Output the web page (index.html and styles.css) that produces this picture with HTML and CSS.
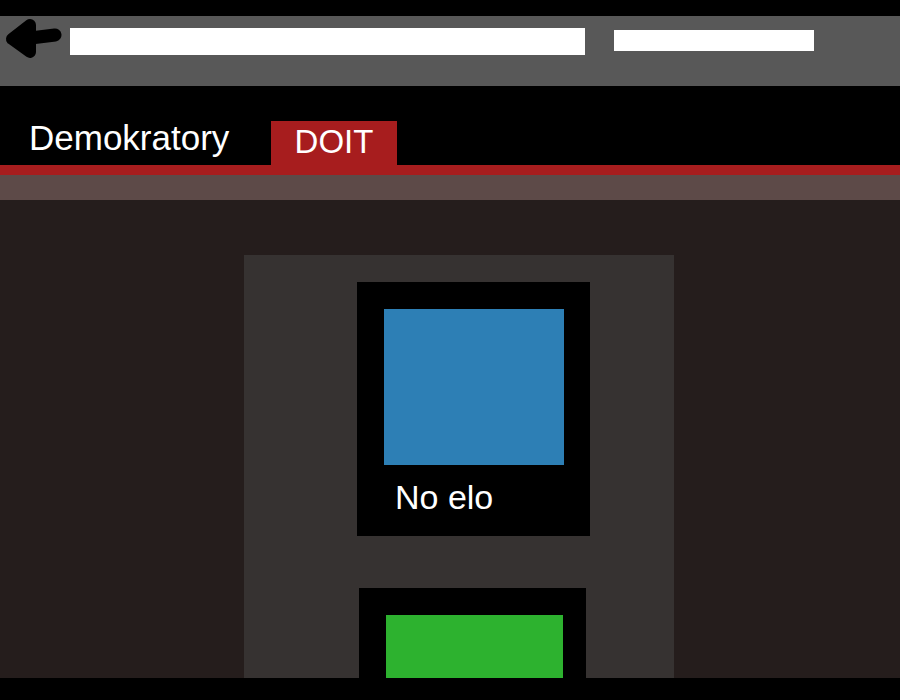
FILE: index.html
```html
<!DOCTYPE html>
<html>
<head>
<meta charset="utf-8">
<title>Demokratory</title>
<link rel="stylesheet" href="styles.css">
</head>
<body>
<div class="topstrip"></div>
<div class="toolbar">
  <svg class="back" width="62" height="70" viewBox="0 0 62 70">
    <path d="M30 9 L12 23 L30 36 Z" fill="#000" stroke="#000" stroke-width="12" stroke-linejoin="round"/>
    <path d="M14 23 Q35 22 55 19" fill="none" stroke="#000" stroke-width="13" stroke-linecap="round"/>
  </svg>
  <div class="search"></div>
  <div class="smallbox"></div>
</div>
<nav class="nav">
  <span class="brand">Demokratory</span>
  <span class="tab">DOIT</span>
</nav>
<div class="redline"></div>
<div class="subbar"></div>
<main class="main">
  <section class="panel">
    <div class="card card-one">
      <div class="thumb thumb-blue"></div>
      <div class="caption">No elo</div>
    </div>
    <div class="card card-two">
      <div class="thumb thumb-green"></div>
    </div>
  </section>
</main>
<div class="footer"></div>
</body>
</html>
```
FILE: styles.css
```css
* { box-sizing: border-box; }
html, body { margin: 0; padding: 0; }
body {
  background: #251d1c;
  font-family: "Liberation Sans", Arial, sans-serif;
  color: #fff;
  height: 700px;
  overflow: hidden;
}
.topstrip { height: 16px; background: #000; }
.toolbar {
  height: 70px;
  background: #585858;
  display: flex;
  align-items: flex-start;
}
.back { display: block; margin-right: 8px; }
.search {
  width: 515px;
  height: 27px;
  background: #fff;
  margin-top: 12px;
}
.smallbox {
  width: 200px;
  height: 21px;
  background: #fff;
  margin-top: 14px;
  margin-left: 29px;
}
.nav {
  height: 79px;
  background: #000;
  display: flex;
  align-items: flex-end;
}
.brand {
  font-size: 35px;
  line-height: 34px;
  margin-left: 29px;
  margin-bottom: 10px;
  width: 242px;
}
.tab {
  background: #a71d1e;
  width: 126px;
  height: 44px;
  font-size: 33px;
  line-height: 42px;
  text-align: center;
  padding-bottom: 2px;
}
.redline { height: 10px; background: #a71d1e; }
.subbar { height: 25px; background: #5d4a48; }
.main { padding-top: 55px; padding-left: 244px; }
.panel {
  width: 430px;
  height: 423px;
  overflow: hidden;
  background: #363231;
  padding-top: 27px;
  display: flex;
  flex-direction: column;
  gap: 52px;
}
.card { background: #000; flex-shrink: 0; }
.card-one { width: 233px; margin-left: 113px; padding: 27px 26px 19px 27px; }
.card-two { width: 227px; margin-left: 115px; padding: 27px 23px 19px 27px; }
.thumb { width: 100%; }
.thumb-blue { height: 156px; background: #2d7fb5; }
.thumb-green { height: 120px; background: #2db22f; }
.caption {
  font-size: 34px;
  line-height: 40px;
  margin-top: 12px;
  padding-left: 11px;
}
.footer {
  position: fixed;
  left: 0;
  right: 0;
  bottom: 0;
  height: 22px;
  background: #000;
}
```
